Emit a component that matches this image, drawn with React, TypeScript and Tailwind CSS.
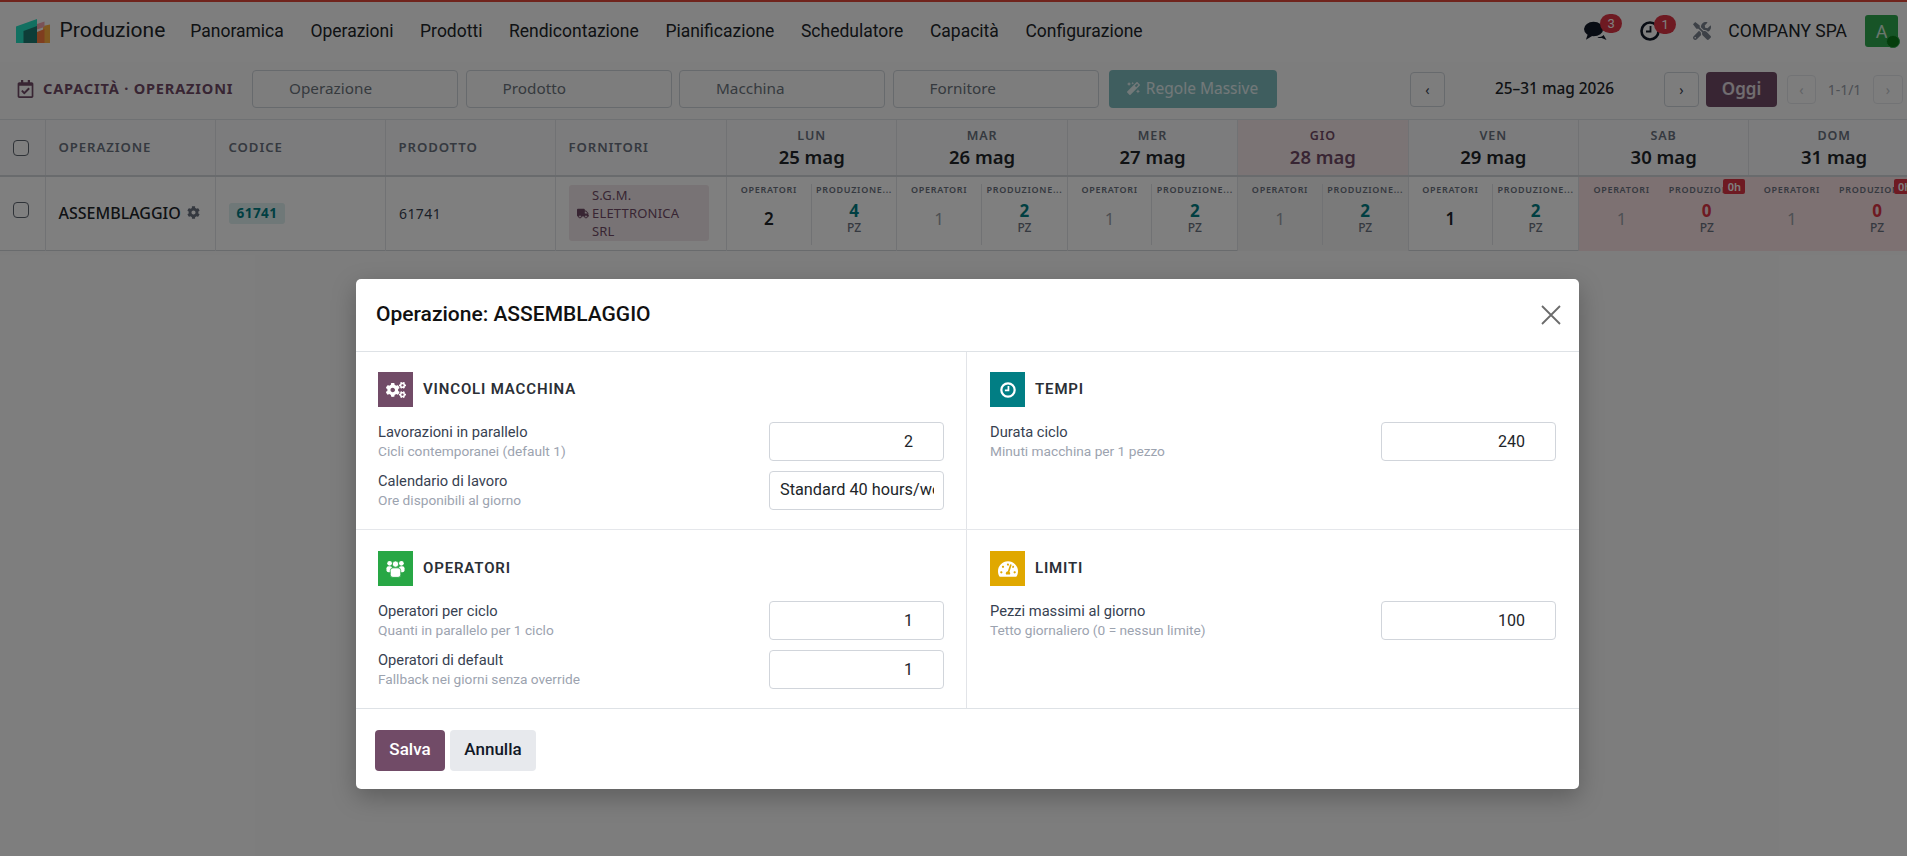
import { FaCog, FaCogs, FaMagic, FaRegCalendarCheck, FaTachometerAlt, FaTools, FaTruck } from 'react-icons/fa'
import type { ReactNode } from 'react'

const ubuntu = "font-['Noto_Sans',sans-serif]"

const menu = ['Panoramica', 'Operazioni', 'Prodotti', 'Rendicontazione', 'Pianificazione', 'Schedulatore', 'Capacità', 'Configurazione']

const days = [
  { name: 'LUN', date: '25 mag', ops: '2', opsOn: true, qty: '4' },
  { name: 'MAR', date: '26 mag', ops: '1', qty: '2' },
  { name: 'MER', date: '27 mag', ops: '1', qty: '2' },
  { name: 'GIO', date: '28 mag', ops: '1', qty: '2', today: true },
  { name: 'VEN', date: '29 mag', ops: '1', opsOn: true, qty: '2' },
  { name: 'SAB', date: '30 mag', ops: '1', qty: '0', off: true },
  { name: 'DOM', date: '31 mag', ops: '1', qty: '0', off: true },
]

function Logo() {
  return (
    <svg viewBox="0 0 34 24" className="w-[34px] h-[24px] shrink-0">
      <path d="M27 7l7-1.500V24h-7z" fill="#ffb040" />
      <path d="M21 5l7.500-2.500v5.500L21 10.500z" fill="#f4a3ad" />
      <path d="M21 13l7.500-3V24H21z" fill="#ff7a3e" />
      <path d="M0 7.500 21 0v24H0z" fill="#24e0c2" />
      <path d="M7.500 12 21 7v17H7.500z" fill="#1c7a70" />
    </svg>
  )
}

function Badge({ n, className }: { n: string; className: string }) {
  return (
    <span className={`absolute flex items-center justify-center rounded-full bg-[#dc3545] text-white text-[13px] ${className}`}>{n}</span>
  )
}

function Filter({ label }: { label: string }) {
  return (
    <div className={`w-[206px] h-[38px] border border-[#ced4da] rounded-[4px] pl-[36px] pb-[1px] flex items-center text-[15.300px] text-[#6c757d] ${ubuntu}`}>{label}</div>
  )
}

function Box() {
  return <span className="block w-4 h-4 rounded-[4px] border border-[#5f6670] bg-white" />
}

function Users() {
  return (
    <svg viewBox="0 0 20 18" className="w-[19px] h-[18px]" fill="currentColor">
      <circle cx="3.800" cy="3" r="2.500" />
      <circle cx="16.200" cy="3" r="2.500" />
      <rect x="0.500" y="6" width="6" height="6.500" rx="2.200" />
      <rect x="13.500" y="6" width="6" height="6.500" rx="2.200" />
      <circle cx="10" cy="3.800" r="3.300" stroke="#28a745" strokeWidth="0.800" />
      <rect x="4.500" y="7.800" width="11" height="10" rx="2.800" stroke="#28a745" strokeWidth="0.800" />
    </svg>
  )
}

function DayCell({ d }: { d: (typeof days)[number] }) {
  const bg = d.off ? 'bg-[#fbe3e5]' : d.today ? 'bg-[#f5f5f5]' : ''
  const border = d.off ? '' : 'border-r border-[#e3e5e8]'
  return (
    <div className={`relative flex h-[74px] pt-[7px] ${bg} ${border} ${ubuntu}`}>
      <div className={`w-1/2 h-[61px] flex flex-col items-center ${d.off ? '' : 'border-r border-[#e3e5e8]'}`}>
        <span className="text-[9px] leading-[11px] font-semibold tracking-[0.7px] text-[#6b7280]">OPERATORI</span>
        <span className={`mt-[12px] text-[17px] leading-[24px] ${d.opsOn ? 'font-semibold text-[#212529]' : 'text-[#9aa0a8]'}`}>{d.ops}</span>
      </div>
      <div className="w-1/2 h-[61px] flex flex-col items-center overflow-hidden">
        <span className="text-[9px] leading-[11px] font-semibold tracking-[0.7px] text-[#6b7280] whitespace-nowrap">PRODUZIONE...</span>
        <span className={`mt-[6px] text-[17px] leading-[20px] font-bold ${d.off ? 'text-[#dc3545]' : 'text-[#017e84]'}`}>{d.qty}</span>
        <span className="text-[12px] leading-[14px] font-medium text-[#6b7280]">PZ</span>
      </div>
      {d.off && (
        <span className="absolute top-[2px] right-[4px] w-[22px] h-[15px] rounded-[2px] bg-[#dc3545] text-white text-[11px] leading-[15px] text-center font-semibold">0h</span>
      )}
    </div>
  )
}

function Section({ icon, tile, title, first, last, children }: { icon: ReactNode; tile: string; title: string; first?: boolean; last?: boolean; children: ReactNode }) {
  return (
    <div className={`h-full ${first ? 'pt-[20px]' : 'pt-[21px]'} ${last ? 'px-[23px]' : 'px-[22px] border-r border-[#e2e4e8]'}`}>
      <div className="flex items-center gap-[10px] mb-[15px]">
        <span className={`w-[35px] h-[35px] flex items-center justify-center text-white text-[20px] ${tile}`}>{icon}</span>
        <span className="text-[15px] font-semibold tracking-[0.850px] text-[#2b2f36]">{title}</span>
      </div>
      <div className="flex flex-col gap-[10px]">{children}</div>
    </div>
  )
}

function Field({ label, hint, value, left }: { label: string; hint: string; value: string; left?: boolean }) {
  return (
    <div className="flex items-center justify-between h-[39px]">
      <div className="pb-[2px]">
        <div className="text-[14.700px] leading-[20px] text-[#374151]">{label}</div>
        <div className="text-[13.700px] leading-[18px] text-[#9ca3af]">{hint}</div>
      </div>
      {left ? (
        <div className="w-[175px] h-[39px] shrink-0 flex items-center border border-[#d1d5db] rounded-[4px] pl-[10px] pr-[9px] text-[16.300px] text-[#212529]">
          <span className="block overflow-hidden whitespace-nowrap">{value}</span>
        </div>
      ) : (
        <div className="w-[175px] h-[39px] shrink-0 flex items-center justify-end border border-[#d1d5db] rounded-[4px] pr-[30px] text-[16px] text-[#212529]">{value}</div>
      )}
    </div>
  )
}

export default function App() {
  return (
    <div className="relative h-[856px] overflow-hidden bg-[#fbfbfb] font-['Roboto',sans-serif] text-[#212529]">
      {/* navbar */}
      <header className="h-[62px] border-t-2 border-[#e0493a] flex items-center pl-[15.500px] pr-[9px] pb-[2px] bg-[#fdfdfd]">
        <Logo />
        <span className="ml-[10px] text-[21px] text-[#212529]">Produzione</span>
        <nav className="ml-[25px] flex items-center gap-[26.600px] text-[17.500px]">
          {menu.map((m) => (
            <span key={m}>{m}</span>
          ))}
        </nav>
        <div className="ml-auto flex items-center">
          <span className="relative w-[23px] h-[20px] mr-[33px]">
            <svg viewBox="0 0 24 20" className="w-[23px] h-[20px] text-[#111827]" fill="currentColor">
              <ellipse cx="10" cy="8" rx="10" ry="7.600" />
              <path d="M4 13l-2 6 7-4z" />
              <path d="M14 16.500c3 0 5-.8 6.500-2.300l3 5.300-5-2.200c-1.500.2-3.500 0-4.500-.8z" />
            </svg>
            <Badge n="3" className="-top-[7px] left-[16px] w-[22px] h-[19px]" />
          </span>
          <span className="relative w-[20px] h-[20px] mr-[33px]">
            <svg viewBox="0 0 20 20" className="w-[20px] h-[20px]" fill="none" stroke="#111827" strokeWidth="2.600">
              <circle cx="10" cy="10" r="8.500" />
              <path d="M10.500 5v5.500H6" strokeWidth="1.800" />
            </svg>
            <Badge n="1" className="-top-[6px] left-[14px] w-[22px] h-[19px]" />
          </span>
          <FaTools className="w-[18px] h-[18px] text-[#7a828e] mr-[17px]" />
          <span className="text-[17.500px] mr-[18px]">COMPANY SPA</span>
          <span className="relative w-[33px] h-[32px] rounded-[3px] bg-[#2fa84f] text-white/80 text-[18px] flex items-center justify-center">
            A
            <span className="absolute -right-[2px] -bottom-[1px] w-[14px] h-[13px] rounded-full bg-[#0a7a18] border border-[#2fa84f]" />
          </span>
        </div>
      </header>

      {/* toolbar */}
      <div className={`h-[57px] flex items-center pl-[17px] pr-[4px] pb-[3px] ${ubuntu}`}>
        <FaRegCalendarCheck className="w-[17px] h-[18px] text-[#714b67]" />
        <span className="ml-[9px] w-[209px] text-[14.600px] font-bold tracking-[0.800px] text-[#714b67] whitespace-nowrap">CAPACITÀ · OPERAZIONI</span>
        <div className="flex gap-[7.500px]">
          <Filter label="Operazione" />
          <Filter label="Prodotto" />
          <Filter label="Macchina" />
          <Filter label="Fornitore" />
        </div>
        <button className="ml-[10px] w-[168px] h-[38px] pb-[1px] rounded-[4px] bg-[#7fbcbf] text-white/80 text-[15.500px] flex items-center justify-center gap-[6px]">
          <FaMagic className="w-[13px] h-[13px]" />
          Regole Massive
        </button>
        <div className="ml-auto flex items-center">
          <span className="w-[35px] h-[35px] border border-[#ced4da] rounded-[4px] flex items-center justify-center text-[14px] text-[#374151]">‹</span>
          <span className="w-[219px] text-center text-[15.400px] font-medium text-[#212529]">25–31 mag 2026</span>
          <span className="w-[35px] h-[35px] border border-[#ced4da] rounded-[4px] flex items-center justify-center text-[14px] text-[#374151]">›</span>
          <span className="ml-[7px] w-[71px] h-[35px] rounded-[4px] bg-[#714b67] text-white/80 text-[17px] font-semibold flex items-center justify-center">Oggi</span>
          <span className="ml-[10px] w-[29px] h-[29px] border border-[#e5e7eb] rounded-[4px] flex items-center justify-center text-[14px] text-[#c3c7cc]">‹</span>
          <span className="w-[57px] text-center text-[14px] text-[#9aa0a8]">1-1/1</span>
          <span className="w-[30px] h-[29px] border border-[#e5e7eb] rounded-[4px] flex items-center justify-center text-[14px] text-[#c3c7cc]">›</span>
        </div>
      </div>

      {/* table */}
      <div className={`w-[1920px] border-t border-[#dee2e6] ${ubuntu}`}>
        <div className="grid grid-cols-[46px_170px_170px_170px_171px_repeat(7,170.400px)] h-[57px] bg-[#f8f9fa] border-b-2 border-[#d3d6da] text-[13.200px] font-semibold tracking-[0.900px] text-[#6b7280]">
          <div className="border-r border-[#e3e5e8] flex items-center justify-center pr-[3px]"><Box /></div>
          {['OPERAZIONE', 'CODICE', 'PRODOTTO', 'FORNITORI'].map((h) => (
            <div key={h} className="border-r border-[#e3e5e8] flex items-center pl-[12.500px]">{h}</div>
          ))}
          {days.map((d) => (
            <div key={d.name} className={`border-r border-[#e3e5e8] flex flex-col items-center pt-[8px] ${d.today ? 'bg-[#f7e8ea] text-[#714b67]' : ''}`}>
              <span className="text-[12.500px] leading-[16px]">{d.name}</span>
              <span className={`text-[18.500px] leading-[26px] font-semibold tracking-normal ${d.today ? 'text-[#714b67]' : 'text-[#212529]'}`}>{d.date}</span>
            </div>
          ))}
        </div>
        <div className="grid grid-cols-[46px_170px_170px_170px_171px_repeat(7,170.400px)] h-[74px] border-b border-[#d3d6da] bg-white">
          <div className="border-r border-[#e3e5e8] flex items-start justify-center pr-[3px] pt-[25px]"><Box /></div>
          <div className="border-r border-[#e3e5e8] flex items-center pl-[12.500px] pb-[3px] gap-[6px] text-[16px] font-medium text-[#212529]">
            ASSEMBLAGGIO <FaCog className="w-[13px] h-[13px] text-[#6b7280]" />
          </div>
          <div className="border-r border-[#e3e5e8] flex items-center pl-[13px] pb-[2px]">
            <span className="w-[56px] h-[21px] rounded-[3px] bg-[#dff0f0] text-[#017e84] text-[13.500px] font-bold tracking-[0.500px] flex items-center justify-center">61741</span>
          </div>
          <div className="border-r border-[#e3e5e8] flex items-center pl-[13px] pb-[2px] text-[14px] text-[#374151] tracking-[0.400px]">61741</div>
          <div className="border-r border-[#e3e5e8] flex items-center pl-[13px] pb-[2px]">
            <span className="w-[140px] h-[56px] rounded-[3px] bg-[#f1e7ea] text-[#714b67] text-[13px] leading-[18px] tracking-[0.200px] flex items-center pl-[8px] gap-[3px]">
              <FaTruck className="w-[12px] h-[11px] shrink-0" />
              <span>S.G.M.<br />ELETTRONICA<br />SRL</span>
            </span>
          </div>
          {days.map((d) => (
            <DayCell key={d.name} d={d} />
          ))}
        </div>
      </div>

      {/* dialog */}
      <div className="absolute inset-0 bg-black/50 pt-[279px] pl-[356px]">
        <div className="w-[1223px] h-[510px] bg-white rounded-[5px] shadow-[0_8px_24px_rgba(0,0,0,0.25)] flex flex-col">
          <div className="h-[73px] shrink-0 flex items-center justify-between pl-[20px] pr-[18px] border-b border-[#dee2e6]">
            <h2 className="text-[21px] font-medium text-[#111]">Operazione: ASSEMBLAGGIO</h2>
            <svg viewBox="0 0 20 20" className="w-[20px] h-[20px]" stroke="#6b6b6b" strokeWidth="1.800">
              <path d="M1 1l18 18M19 1 1 19" />
            </svg>
          </div>
          <div className="grid grid-cols-[611px_612px] grid-rows-[178px_178px] border-b border-[#dee2e6]">
            <div className="border-b border-[#e5e7eb]">
              <Section first icon={<FaCogs />} tile="bg-[#714b67]" title="VINCOLI MACCHINA">
                <Field label="Lavorazioni in parallelo" hint="Cicli contemporanei (default 1)" value="2" />
                <Field label="Calendario di lavoro" hint="Ore disponibili al giorno" value="Standard 40 hours/week" left />
              </Section>
            </div>
            <div className="border-b border-[#e5e7eb]">
              <Section first last icon={
                <svg viewBox="0 0 18 18" className="w-[16px] h-[16px]" fill="none" stroke="currentColor" strokeWidth="2.500">
                  <circle cx="9" cy="9" r="7.500" />
                  <path d="M9.500 4.500v5H5.500" strokeWidth="2" />
                </svg>
              } tile="bg-[#017e84]" title="TEMPI">
                <Field label="Durata ciclo" hint="Minuti macchina per 1 pezzo" value="240" />
              </Section>
            </div>
            <Section icon={<Users />} tile="bg-[#28a745]" title="OPERATORI">
              <Field label="Operatori per ciclo" hint="Quanti in parallelo per 1 ciclo" value="1" />
              <Field label="Operatori di default" hint="Fallback nei giorni senza override" value="1" />
            </Section>
            <Section last icon={<FaTachometerAlt />} tile="bg-[#e0a800]" title="LIMITI">
              <Field label="Pezzi massimi al giorno" hint="Tetto giornaliero (0 = nessun limite)" value="100" />
            </Section>
          </div>
          <div className="flex gap-[5px] pl-[19px] pt-[21px]">
            <button className="w-[70px] h-[41px] pb-[2px] rounded-[4px] bg-[#714b67] text-white text-[17px] font-medium">Salva</button>
            <button className="w-[86px] h-[41px] pb-[2px] rounded-[4px] bg-[#e7e9ed] text-[#111827] text-[17px] font-medium">Annulla</button>
          </div>
        </div>
      </div>
    </div>
  )
}
